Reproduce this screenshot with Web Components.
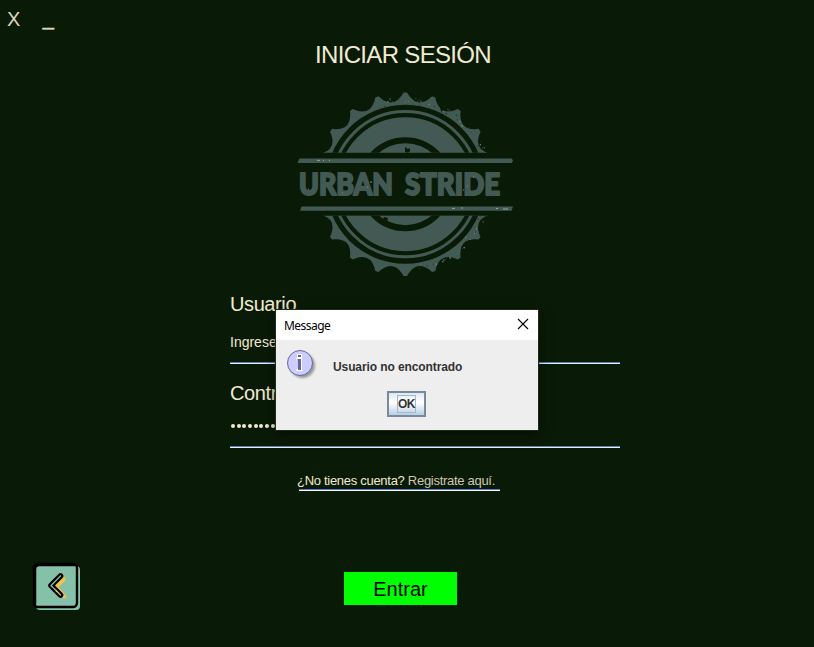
<!DOCTYPE html>
<html lang="es">
<head>
<meta charset="utf-8">
<title>Urban Stride</title>
<style>
html,body{margin:0;height:100%;background:#091a06;overflow:hidden}
</style>
</head>
<body>
<login-screen></login-screen>
<script>
const define = (name, html, setup) => customElements.define(name, class extends HTMLElement {
  constructor() {
    super();
    const t = document.createElement('template');
    t.innerHTML = html;
    this.attachShadow({mode: 'open'}).append(t.content.cloneNode(true));
  }
  connectedCallback() { if (setup) setup(this, this.shadowRoot); }
});

define('window-controls', `
<style>
:host{display:flex;height:39px;padding-left:7px;box-sizing:border-box;gap:23px;font-size:20px;line-height:39px;color:#ddd5bf}
.x{letter-spacing:-.5px}
.min{line-height:36px;-webkit-text-stroke:.5px #ddd5bf}
</style><span class="x">X</span><span class="min">_</span>`);

define('brand-logo', `
<style>:host{display:block;width:240px;height:200px}svg{display:block;overflow:visible}</style>
<svg width="240" height="200" viewBox="285 84 240 200" fill="#435a54">
  <defs>
    <clipPath id="halves"><path d="M285 84H525V152.7H285ZM285 215.8H525V284H285Z"/></clipPath>
  </defs>
  <g clip-path="url(#halves)">
    <path id="gear"/>
    <circle cx="405.3" cy="184.2" r="79.5" fill="#091a06"/>
    <circle cx="405.3" cy="184.2" r="72.6" fill="none" stroke="#435a54" stroke-width="3"/>
    <circle cx="405.3" cy="184.2" r="57" fill="none" stroke="#435a54" stroke-width="20"/>
    <circle cx="405.3" cy="184.2" r="41"/>
    <g id="wear"></g>
    <path d="M405 147l3 2 2-1v3l-2 2-3-1zM440 108l3 1-1 4zM384 217l4 1-1 4-4-2z" fill="#091a06"/>
  </g>
  <path d="M299.5 158.6H512L513 161l-1.500 2H297.500ZM301.500 206.600H513L511.500 210.700H300Z"/>
  <path d="M317 160.400h3M323 160.400h1M329 160.400h1M452 208.400h3M461 208h2M496 208.500h2M503 209h5" stroke="#91a69e" fill="none"/>
  <g font-family="Lato,sans-serif" font-weight="900" font-size="31" stroke="#435a54" stroke-width="2" stroke-linejoin="round">
    <text x="299" y="195" textLength="94" lengthAdjust="spacingAndGlyphs">URBAN</text>
    <text x="405" y="195" textLength="95" lengthAdjust="spacingAndGlyphs">STRIDE</text>
  </g>
  <path d="M308 189h1M342 193h1M371 181v2M367 187h1M463 190h1M467 186h1M473 177h1" stroke="#7d958d" fill="none"/>
</svg>`, (el, root) => {
  const cx = 405.3, cy = 184.2, pt = (r, deg) => {
    const a = deg * Math.PI / 180;
    return (cx + r * Math.sin(a)).toFixed(2) + ' ' + (cy - r * Math.cos(a)).toFixed(2);
  };
  let d = 'M' + pt(91.8, -1.1);
  for (let i = 0; i < 20; i++) {
    const a = i * 18;
    d += 'L' + pt(91.8, a + 1.1) + 'L' + pt(89, a + 2.2) + 'Q' + pt(77.5, a + 9) + ' ' + pt(89, a + 15.8) + 'L' + pt(91.8, a + 16.9);
  }
  root.getElementById('gear').setAttribute('d', d + 'Z');
  let seed = 7, w = '';
  const rnd = () => (seed = seed * 16807 % 2147483647) / 2147483647;
  for (let i = 0; i < 90; i++) {
    const [x, y] = pt(80 + rnd() * 7, rnd() * 190 - 15).split(' ');
    w += `<circle cx="${x}" cy="${y}" r="${(.3 + rnd() * .55).toFixed(2)}" fill="${rnd() < .5 ? '#1a2d1b' : '#71887f'}"/>`;
  }
  root.getElementById('wear').innerHTML = w;
});

define('underlined-field', `
<style>
:host{display:flex;flex-direction:column;width:390px;color:#f1ead2}
.label{font-size:20px;line-height:24px;height:var(--lh);letter-spacing:-.4px}
.value{font-size:14px;line-height:18px;height:var(--vh);white-space:nowrap}
.rule{height:1px;background:#5b7cc4;border-bottom:1px solid #e9f0f5}
</style>
<div class="label"><slot name="label"></slot></div><div class="value"><slot></slot></div><div class="rule"></div>`);

define('password-dots', `
<style>:host{display:flex;gap:1.7px;padding:7px 0 0 1px}i{width:4px;height:4px;border-radius:2px;background:#f1ead2}</style>`,
(el, root) => { for (let i = 0; i < 9; i++) root.append(document.createElement('i')); });

define('register-link', `
<style>
:host{display:block;width:203px;font-size:13px;line-height:17px;color:#f1ead2;white-space:nowrap;letter-spacing:-.29px}
.rule{margin-left:2px;width:201px;height:1px;background:#5b7cc4;border-bottom:1px solid #fff}
em{font-style:normal;color:#cfc6b4}
</style><div><slot></slot> <em><slot name="action"></slot></em></div><div class="rule"></div>`);

define('enter-button', `
<style>:host{display:grid;place-items:center;width:113px;height:33px;padding-top:1px;background:#0f0;color:#000;font-size:20px;box-sizing:border-box}</style><span><slot></slot></span>`);

define('back-button', `
<style>:host{display:block;width:50px;height:50px}svg{display:block}</style>
<svg width="50" height="50" viewBox="32 561 50 50" fill="none" stroke-linecap="round" stroke-linejoin="round">
  <rect x="36" y="566" width="44" height="44" rx="4" fill="#85c0a8"/>
  <rect x="34" y="564" width="43" height="43" rx="4" stroke="#000" stroke-width="2.400"/>
  <path d="M35 604V568Q35 565 38 565H75" stroke="#000" stroke-width="2.500"/>
  <path d="M63.800 579L56 587L64.500 596.500" stroke="#eec34c" stroke-width="4"/>
  <path d="M60.500 576L51 585.500L60.500 595" stroke="#000" stroke-width="5.600"/>
  <path d="M60.500 576L51 585.500L57 591.500" stroke="#85c0a8" stroke-width="1.200"/>
  <path d="M56 590.500L60.500 595" stroke="#eec34c" stroke-width="1.200"/>
</svg>`);

define('message-dialog', `
<style>
:host{display:flex;flex-direction:column;width:262px;height:120px;background:#eee;color:#333;box-shadow:0 0 0 1px #1c2b1a,0 3px 12px #0008}
header{display:flex;justify-content:space-between;align-items:center;height:30px;padding:0 9px 0 8px;box-sizing:border-box;background:#fff;color:#000;font:12px "Noto Sans","Open Sans",sans-serif}
header span{letter-spacing:-.3px}
header svg{display:block;margin-bottom:2px}
.title{letter-spacing:-.55px}
.body{display:flex;padding:9px 0 0 10px;height:42px;gap:15px}
.text{font-weight:bold;font-size:12px;line-height:16px;padding-top:10px;white-space:nowrap;letter-spacing:-.1px}
.ok{align-self:center;box-sizing:border-box;width:39px;height:26px;border:2px solid #7a8a99;background:linear-gradient(#dde8f3,#fff 40%,#fff 45%,#b8cfe5);display:grid;place-items:center;font-weight:bold;font-size:12px;margin-right:1px}
.ok span{border:1px solid #a3b8cc;width:17px;height:16px;line-height:17px;text-align:center;letter-spacing:-.6px}
</style>
<header><span class="title"><slot name="title"></slot></span>
<svg width="12" height="12" stroke="#000" stroke-width="1.100"><path d="M1 1L11 11M11 1L1 11"/></svg></header>
<div class="body">
<svg width="32" height="32" viewBox="0 0 32 32">
  <defs><filter id="s" x="-30%" y="-30%" width="170%" height="170%"><feGaussianBlur stdDeviation="1.300"/></filter></defs>
  <circle cx="16.500" cy="16.500" r="12.500" fill="#777" opacity=".7" filter="url(#s)"/>
  <circle cx="14" cy="14" r="12.500" fill="#ccf" stroke="#669"/>
  <path d="M11 5h5v4h-5zM10.500 9H16v12h1v1h-6.500v-2H12v-8h-1.500z" fill="#fff"/>
  <path d="M12 6h3v2h-3zM11.500 10H15v11h-3v-9h-.5z" fill="#669"/>
</svg>
<div class="text"><slot></slot></div></div>
<div class="ok"><span>OK</span></div>`);

define('login-screen', `
<style>
:host{position:relative;display:flex;flex-direction:column;width:814px;height:647px;background:#091a06;font-family:"Liberation Sans",Arial,sans-serif}
h1{margin:0;align-self:flex-start;padding-left:315px;font-weight:400;font-size:24px;line-height:32px;color:#f1ead2;white-space:nowrap;letter-spacing:-.67px}
brand-logo{margin:13px 0 0 285px}
.user{--lh:41px;--vh:29px;margin:8px 0 0 230px}
.pass{--lh:36px;--vh:29px;margin:17px 0 0 230px}
register-link{margin:24px 0 0 297px}
footer{display:flex;align-items:flex-end;height:50px;margin-top:70px;padding-left:32px;gap:262px}
enter-button{margin-bottom:6px}
message-dialog{position:absolute;left:276px;top:310px}
</style>
<window-controls></window-controls>
<h1>INICIAR SESIÓN</h1>
<brand-logo></brand-logo>
<underlined-field class="user"><span slot="label">Usuario</span>Ingrese</underlined-field>
<underlined-field class="pass"><span slot="label">Contr</span><password-dots></password-dots></underlined-field>
<register-link>¿No tienes cuenta?<span slot="action">Registrate aquí.</span></register-link>
<footer><back-button></back-button><enter-button>Entrar</enter-button></footer>
<message-dialog><span slot="title">Message</span>Usuario no encontrado</message-dialog>`);
</script>
</body>
</html>
